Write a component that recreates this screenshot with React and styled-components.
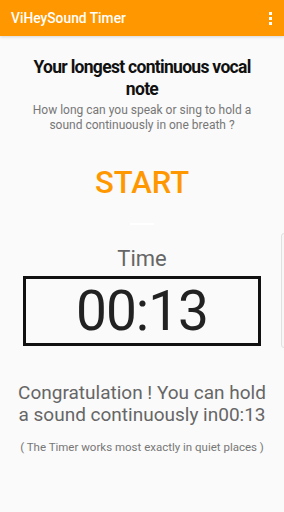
import styled, { createGlobalStyle } from 'styled-components'

const GlobalStyle = createGlobalStyle`
  html, body {
    margin: 0;
    padding: 0;
    background: #fafafa;
    font-family: 'Roboto', 'Liberation Sans', sans-serif;
  }
`

function App() {
  return (
    <>
      <GlobalStyle />
      <Page>
        <AppBar>
          <BarTitle>ViHeySound Timer</BarTitle>
          <MenuDots>
            <i />
            <i />
            <i />
          </MenuDots>
        </AppBar>
        <Content>
          <Heading>Your longest continuous vocal note</Heading>
          <Sub>How long can you speak or sing to hold a sound continuously in one breath ?</Sub>
          <StartBtn>START</StartBtn>
          <Divider />
          <TimeLabel>Time</TimeLabel>
          <TimerBox>00:13</TimerBox>
          <Result>Congratulation ! You can hold a sound continuously in00:13</Result>
          <Note>( The Timer works most exactly in quiet places )</Note>
        </Content>
        <EdgeHandle />
      </Page>
    </>
  )
}

export default App

const Page = styled.div`
  width: 284px;
  height: 512px;
  position: relative;
  overflow: hidden;
  background: #fafafa;
`

const AppBar = styled.header`
  height: 36px;
  background: #ff9800;
  display: flex;
  align-items: center;
  justify-content: space-between;
  padding: 0 12px 0 11px;
  box-shadow: 0 1px 3px rgba(0, 0, 0, 0.15);
`

const BarTitle = styled.h1`
  margin: 0;
  color: #fff;
  font-size: 13.8px;
  font-weight: 500;
`

const MenuDots = styled.div`
  display: flex;
  flex-direction: column;
  gap: 2px;

  i {
    display: block;
    width: 3px;
    height: 3px;
    background: #fff;
  }
`

const Content = styled.main`
  display: flex;
  flex-direction: column;
  align-items: center;
  text-align: center;
  padding: 20px 0 0;
`

const Heading = styled.h2`
  margin: 0;
  width: 230px;
  color: #111;
  font-size: 17.5px;
  font-weight: 700;
  line-height: 22px;
  letter-spacing: -0.7px;
`

const Sub = styled.p`
  margin: 3px 0 0;
  width: 230px;
  color: #777;
  font-size: 12px;
  line-height: 15px;
`

const StartBtn = styled.div`
  margin-top: 32px;
  color: #ff9800;
  font-size: 31px;
  font-weight: 500;
  line-height: 36px;
`

const Divider = styled.div`
  margin-top: 22px;
  width: 24px;
  height: 2px;
  background: #fff;
`

const TimeLabel = styled.div`
  margin-top: 21px;
  color: #666;
  font-size: 22px;
  line-height: 26px;
`

const TimerBox = styled.div`
  margin-top: 4px;
  width: 232px;
  height: 64px;
  border: 3px solid #111;
  color: #222;
  font-size: 55px;
  line-height: 64px;
  letter-spacing: -1px;
`

const Result = styled.p`
  margin: 36px 0 0;
  width: 256px;
  color: #666;
  font-size: 19px;
  line-height: 22px;
`

const Note = styled.p`
  margin: 14px 0 0;
  color: #777;
  font-size: 11.5px;
`

const EdgeHandle = styled.div`
  position: absolute;
  left: 281px;
  top: 233px;
  width: 10px;
  height: 113px;
  border: 1px solid #e0e0e0;
  border-radius: 3px;
  background: #f7f7f7;
`
